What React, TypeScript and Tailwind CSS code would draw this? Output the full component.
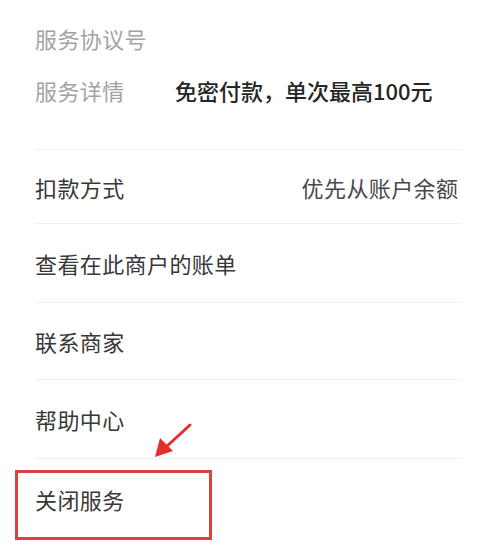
import React from "react";

const font = { fontFamily: '"Noto Sans CJK SC", "Noto Sans", sans-serif' };

function Row({ label, value, last, h }: { label: string; value?: string; last?: boolean; h: string }) {
  return (
    <div className={`flex ${h} items-center overflow-hidden ${last ? "" : "border-b border-[#f0f0f0]"}`}>
      <span className="shrink-0 text-[22px] leading-none tracking-[0.4px] text-[#383838]">{label}</span>
      {value && (
        <span className="ml-[177px] shrink-0 whitespace-nowrap text-[22px] leading-none tracking-[0.4px] text-[#484848]">{value}</span>
      )}
    </div>
  );
}

export default function App() {
  return (
    <div className="relative h-[547px] w-[503px] overflow-hidden bg-white" style={font}>
      <div className="ml-[35px] w-[427px]">
        <div className="flex flex-col gap-[30px] pt-[27px] pb-[48px] border-b border-[#f2f2f2]">
          <div className="text-[22px] leading-[22px] tracking-[0.4px] text-[#a3a3a3]">服务协议号</div>
          <div className="flex items-center text-[22px] leading-[22px]">
            <span className="w-[140px] tracking-[0.4px] text-[#a3a3a3]">服务详情</span>
            <span className="font-medium text-[#262626]">免密付款，单次最高100元</span>
          </div>
        </div>
        <Row h="h-[74px]" label="扣款方式" value="优先从账户余额" />
        <Row h="h-[79px]" label="查看在此商户的账单" />
        <Row h="h-[77px]" label="联系商家" />
        <Row h="h-[79px]" label="帮助中心" />
        <Row h="h-[80px]" label="关闭服务" last />
      </div>
      <div className="absolute left-[15px] top-[470px] h-[70px] w-[197px] border-[3px] border-[#d8433f]" />
      <svg className="absolute left-0 top-0" width="503" height="547" viewBox="0 0 503 547">
        <line x1="190" y1="425" x2="166" y2="447" stroke="#e0302c" strokeWidth="3" strokeLinecap="round" />
        <polygon points="155,457 160,438 173,451" fill="#e0302c" />
      </svg>
    </div>
  );
}
